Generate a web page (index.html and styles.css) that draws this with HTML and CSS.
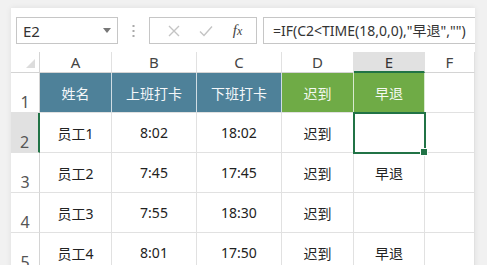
FILE: index.html
```html
<!DOCTYPE html>
<html lang="zh">
<head>
    <title>考勤表</title>
    <link rel="stylesheet" href="styles.css">
</head>
<body>
    <div class="window">
        <div class="toolbar">
            <div class="namebox">
                <span>E2</span>
                <svg width="8" height="5" viewBox="0 0 8 5"><path d="M0 0h8L4 5z" fill="#777"/></svg>
            </div>
            <svg class="dots" width="3" height="14" viewBox="0 0 3 14">
                <rect x="0.5" y="1" width="2" height="2" fill="#aaa"/>
                <rect x="0.5" y="6" width="2" height="2" fill="#aaa"/>
                <rect x="0.5" y="11" width="2" height="2" fill="#aaa"/>
            </svg>
            <div class="fbuttons">
                <svg width="12" height="12" viewBox="0 0 12 12"><path d="M1 1l10 10M11 1L1 11" stroke="#c4c4c4" stroke-width="1.4"/></svg>
                <svg width="14" height="12" viewBox="0 0 14 12"><path d="M1 6.5l4 4L13 1.5" stroke="#c4c4c4" stroke-width="1.4" fill="none"/></svg>
                <span class="fx">f<span>x</span></span>
            </div>
            <div class="formula">=IF(C2&lt;TIME(18,0,0),"早退","")</div>
        </div>

        <div class="grid">
            <div class="corner"><span class="tri"></span></div>
            <div class="colhead">A</div>
            <div class="colhead">B</div>
            <div class="colhead">C</div>
            <div class="colhead">D</div>
            <div class="colhead active">E</div>
            <div class="colhead">F</div>

            <div class="rowhead">1</div>
            <div class="cell blue">姓名</div>
            <div class="cell blue">上班打卡</div>
            <div class="cell blue">下班打卡</div>
            <div class="cell green">迟到</div>
            <div class="cell green">早退</div>
            <div class="cell"></div>

            <div class="rowhead active">2</div>
            <div class="cell">员工1</div>
            <div class="cell">8:02</div>
            <div class="cell">18:02</div>
            <div class="cell">迟到</div>
            <div class="cell selected"></div>
            <div class="cell"></div>

            <div class="rowhead">3</div>
            <div class="cell">员工2</div>
            <div class="cell">7:45</div>
            <div class="cell">17:45</div>
            <div class="cell">迟到</div>
            <div class="cell">早退</div>
            <div class="cell"></div>

            <div class="rowhead">4</div>
            <div class="cell">员工3</div>
            <div class="cell">7:55</div>
            <div class="cell">18:30</div>
            <div class="cell">迟到</div>
            <div class="cell"></div>
            <div class="cell"></div>

            <div class="rowhead">5</div>
            <div class="cell">员工4</div>
            <div class="cell">8:01</div>
            <div class="cell">17:50</div>
            <div class="cell">迟到</div>
            <div class="cell">早退</div>
            <div class="cell"></div>
        </div>
    </div>
</body>
</html>
```

FILE: styles.css
```css
body {
    margin: 0;
    padding: 8px 12px 0 11px;
    background-color: #f1f1f1;
    font-family: 'Noto Sans', 'Noto Sans CJK SC', sans-serif;
    color: #222;
    overflow: hidden;
}
.window {
    background: white;
    box-shadow: 0 0 6px rgba(0, 0, 0, 0.08);
    height: 300px;
}
.toolbar {
    height: 44px;
    display: flex;
    align-items: flex-start;
    padding-top: 9px;
    padding-left: 5px;
    box-sizing: border-box;
}
.namebox {
    width: 102px;
    height: 27px;
    box-sizing: border-box;
    border: 1px solid #c6c6c6;
    display: flex;
    align-items: center;
    justify-content: space-between;
    padding: 0 6px 0 6px;
    font-size: 15px;
    color: #333;
}
.dots {
    margin: 7px 14px 0 14px;
}
.fbuttons {
    width: 108px;
    height: 27px;
    box-sizing: border-box;
    border: 1px solid #c6c6c6;
    display: flex;
    align-items: center;
    justify-content: space-around;
    padding: 0 4px 0 8px;
}
.fx {
    font-family: 'Liberation Serif', serif;
    font-style: italic;
    font-size: 15px;
    color: #444;
}
.fx span {
    font-size: 12px;
}
.formula {
    flex: 1;
    height: 27px;
    margin-left: 6px;
    box-sizing: border-box;
    border: 1px solid #c6c6c6;
    border-right: none;
    padding-left: 9px;
    font-size: 14px;
    line-height: 25px;
    color: #333;
}
.grid {
    display: grid;
    grid-template-columns: 29px 72px 85px 85px 72px 71px 1fr;
    grid-template-rows: 21px repeat(5, 40px);
}
.grid > div {
    box-sizing: border-box;
    border-right: 1px solid #e1e1e1;
    border-bottom: 1px solid #e1e1e1;
    display: flex;
    align-items: center;
    justify-content: center;
    font-size: 14px;
}
.corner {
    position: relative;
    border-bottom-color: #d4d4d4 !important;
    border-right-color: #d4d4d4 !important;
}
.tri {
    position: absolute;
    right: 4px;
    bottom: 4px;
    width: 0;
    height: 0;
    border-left: 9px solid transparent;
    border-bottom: 9px solid #dcdcdc;
}
.grid > .colhead {
    color: #444;
    font-size: 15px;
    border-bottom-color: #d4d4d4;
}
.grid > .colhead.active {
    background: #e1e1e1;
    border-bottom: 2px solid #217346;
    color: #333;
}
.grid > .rowhead {
    color: #555;
    font-size: 16px;
    align-items: flex-end;
    line-height: 1;
    padding-bottom: 2px;
    border-right-color: #d4d4d4;
}
.grid > .rowhead.active {
    background: #e1e1e1;
    border-right: 2px solid #217346;
}
.grid > .cell.blue {
    background: #4e8199;
    color: #f4f7f9;
    border-right-color: #d0dde4;
}
.grid > .cell.green {
    background: #6fab46;
    color: #f4f9f1;
    border-right-color: #d8ead0;
}
.cell.selected {
    position: relative;
    outline: 2px solid #217346;
    outline-offset: -1px;
}
.cell.selected::after {
    content: '';
    position: absolute;
    right: -4px;
    bottom: -4px;
    width: 6px;
    height: 6px;
    background: #217346;
    border: 1px solid white;
}
```
